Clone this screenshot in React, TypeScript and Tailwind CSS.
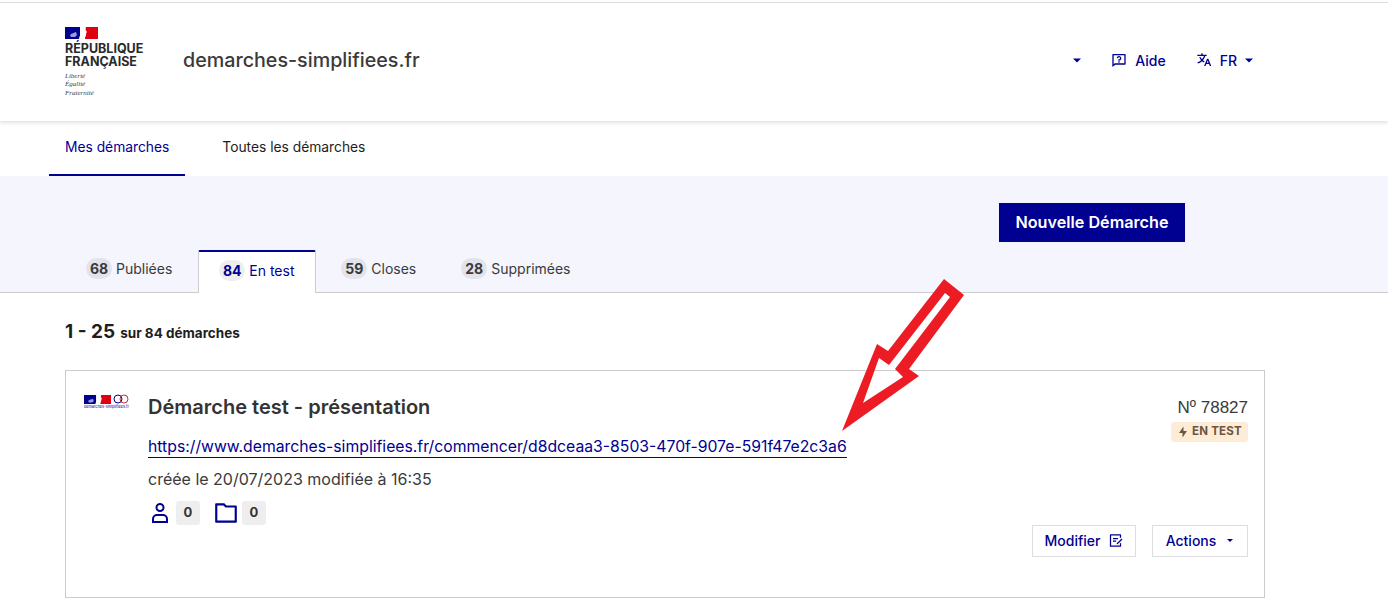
import { RiQuestionnaireLine, RiTranslate2, RiDraftLine, RiFlashlightFill, RiFolderLine } from "react-icons/ri";

const font = { fontFamily: '"Inter", "Liberation Sans", sans-serif' };

function Caret({ className = "" }: { className?: string }) {
  return (
    <svg width="8" height="5" viewBox="0 0 8 5" className={className}>
      <path d="M0 0.5h8L4 4.5z" fill="#000091" />
    </svg>
  );
}

function Flag({ w, h }: { w: number; h: number }) {
  return (
    <svg width={w} height={h} viewBox="0 0 33 12" preserveAspectRatio="none">
      <rect width="15" height="12" fill="#000091" />
      <rect x="15" width="5" height="12" fill="#fff" />
      <rect x="20" width="13" height="12" fill="#e1000f" />
      <path d="M14 12c0-2 1-3 2-5l-1-1c2-2 2-4 3-6h3c-1 2 0 4 1 5-1 1-1 2-1 3 0 2-2 4-4 4z" fill="#fff" />
      <path d="M5 8c2-2 4-2 6-3l1 3-2 2H6z" fill="#9a9ad8" />
    </svg>
  );
}

function Tab({ count, label }: { count: number; label: string }) {
  return (
    <div className="flex items-center h-[42px] px-5 pb-[6px] gap-1 mb-px whitespace-nowrap">
      <span className="flex items-center justify-center h-[21px] min-w-[26px] px-[3px] rounded-full bg-[#e3e3eb] text-[14px] font-bold text-[#3a3a3a]">{count}</span>
      <span className="text-[14px] text-[#3a3a3a]">{label}</span>
    </div>
  );
}

export default function App() {
  return (
    <div className="relative w-[1388px] h-[609px] overflow-hidden bg-white" style={font}>
      {/* Header */}
      <header className="border-t border-[#ddd] mt-[2px] h-[119px] flex items-center justify-between pl-[65px] pr-[135px] shadow-[0_2px_4px_rgba(0,0,0,0.12)] relative z-10 bg-white">
        <div className="flex items-center">
          <div className="w-[118px]">
            <Flag w={33} h={12} />
            <div className="mt-[3px] text-[12.5px] leading-[13px] font-bold text-[#2a2a2a]">RÉPUBLIQUE<br />FRANÇAISE</div>
            <div className="mt-[4px] text-[7px] leading-[8.5px] italic text-[#444]" style={{ fontFamily: '"Liberation Serif", serif' }}>Liberté<br />Égalité<br />Fraternité</div>
          </div>
          <span className="text-[19.7px] font-medium text-[#3a3a3a] -mt-[2px]">demarches-simplifiees.fr</span>
        </div>
        <div className="flex items-center text-[#000091] text-[14px] font-medium -mt-[4px]">
          <Caret className="mr-[30px]" />
          <RiQuestionnaireLine size={16} className="mr-[8px]" />
          <span className="mr-[30px]">Aide</span>
          <RiTranslate2 size={16} className="mr-[8px]" />
          <span className="mr-[8px]">FR</span>
          <Caret />
        </div>
      </header>

      {/* Nav */}
      <nav className="flex h-[55px] pl-[49px] text-[13.8px]">
        <a className="flex items-center h-full px-4 text-[#000091] border-b-2 border-[#000091]">Mes démarches</a>
        <a className="flex items-center h-full px-4 ml-[21px] text-[#1e1e1e] border-b-2 border-transparent">Toutes les démarches</a>
      </nav>

      {/* Band with tabs */}
      <section className="h-[117px] bg-[#f4f5fd] border-b border-[#ccc] flex flex-col justify-between">
        <div className="flex justify-end pr-[203px] pt-[27px]">
          <button className="h-[39px] w-[186px] pb-[1px] bg-[#000091] text-white text-[16.2px] font-semibold">Nouvelle Démarche</button>
        </div>
        <div className="flex gap-[5px] pl-[66px] -mb-px">
          <Tab count={68} label="Publiées" />
          <div className="flex items-center h-[43px] w-[118px] ml-px px-5 pb-1 gap-1 whitespace-nowrap bg-white border-x border-[#ccc] border-t-2 border-t-[#000091] rounded-t-[2px]">
            <span className="flex items-center justify-center h-[21px] min-w-[26px] px-[3px] rounded-full bg-[#eee] text-[14px] font-bold text-[#000091]">84</span>
            <span className="text-[14px] text-[#000091]">En test</span>
          </div>
          <Tab count={59} label="Closes" />
          <Tab count={28} label="Supprimées" />
        </div>
      </section>

      {/* List */}
      <main className="pl-[65px] w-[1265px]">
        <div className="mt-[25px] h-[24px] flex items-baseline gap-[5px] text-[#1e1e1e] font-bold">
          <span className="text-[19px]">1 - 25</span>
          <span className="text-[13.5px]">sur 84 démarches</span>
        </div>
        <article className="mt-[28px] h-[228px] border border-[#ccc] flex pl-[18px] pr-4 pt-[23px]">
          <div className="w-[64px] shrink-0">
            <div className="flex items-center gap-[2px]">
              <Flag w={27} h={9} />
              <svg width="16" height="10" viewBox="0 0 16 10" fill="none" stroke="#c8333a" strokeWidth="1">
                <circle cx="5" cy="5" r="4" stroke="#000091" />
                <circle cx="11" cy="5" r="4" />
              </svg>
            </div>
            <div className="text-[3.8px] leading-[6px] text-[#000091] whitespace-nowrap">demarches-simplifiees.fr</div>
          </div>
          <div className="flex-1 min-w-0">
            <h2 className="text-[20px] leading-[28px] font-semibold text-[#333] -mt-[1px]">Démarche test - présentation</h2>
            <a className="inline-block mt-[15px] text-[15.75px] leading-[22px] text-[#000091] border-b border-[#000091] h-[22px]">https://www.demarches-simplifiees.fr/commencer/d8dceaa3-8503-470f-907e-591f47e2c3a6</a>
            <p className="mt-[9px] text-[16px] leading-[24px] text-[#3a3a3a]">créée le 20/07/2023 modifiée à 16:35</p>
            <div className="mt-[9px] flex items-center text-[#000091]">
              <svg width="24" height="24" viewBox="0 0 24 24" fill="none" stroke="currentColor" strokeWidth="2">
                <circle cx="12" cy="6.5" r="3.5" />
                <path d="M5 21v-3a4 4 0 0 1 4-4h6a4 4 0 0 1 4 4v3z" />
              </svg>
              <span className="ml-[4px] flex items-center justify-center w-6 h-6 rounded-[3px] bg-[#eee] text-[13px] font-bold text-[#333]">0</span>
              <RiFolderLine size={26} className="ml-[13px]" />
              <span className="ml-[3px] flex items-center justify-center w-6 h-6 rounded-[3px] bg-[#eee] text-[13px] font-bold text-[#333]">0</span>
            </div>
          </div>
          <div className="w-[216px] shrink-0 flex flex-col items-end">
            <span className="text-[17px] leading-[24px] text-[#3a3a3a] mt-[2px]" style={{ fontFamily: '"Liberation Sans", sans-serif' }}>Nº 78827</span>
            <span className="mt-[2px] flex items-center gap-[3px] h-5 px-[6px] rounded-[3px] bg-[#feecd6] text-[#6b5642] text-[11.5px] font-bold tracking-[0.02em]">
              <RiFlashlightFill size={12} />EN TEST
            </span>
            <div className="mt-[83px] flex gap-4 text-[14px] font-medium text-[#000091]">
              <button className="h-8 w-[104px] pb-[2px] border border-[#ddd] flex items-center justify-center gap-2">Modifier<RiDraftLine size={15} /></button>
              <button className="h-8 w-[96px] pb-[2px] border border-[#ddd] flex items-center justify-center gap-[10px]">Actions<Caret className="scale-75" /></button>
            </div>
          </div>
        </article>
      </main>

      {/* Annotation arrow */}
      <svg className="absolute left-0 top-0 z-20 pointer-events-none" width="1388" height="609" viewBox="0 0 1388 609">
        <path fillRule="evenodd" fill="#ed1c24" d="M842 431L877 344L888 351L944 279L964 295L909 369L919 376ZM863 403L903 377L895 369L950 297L945 293L889 365L879 358Z" />
      </svg>
    </div>
  );
}
